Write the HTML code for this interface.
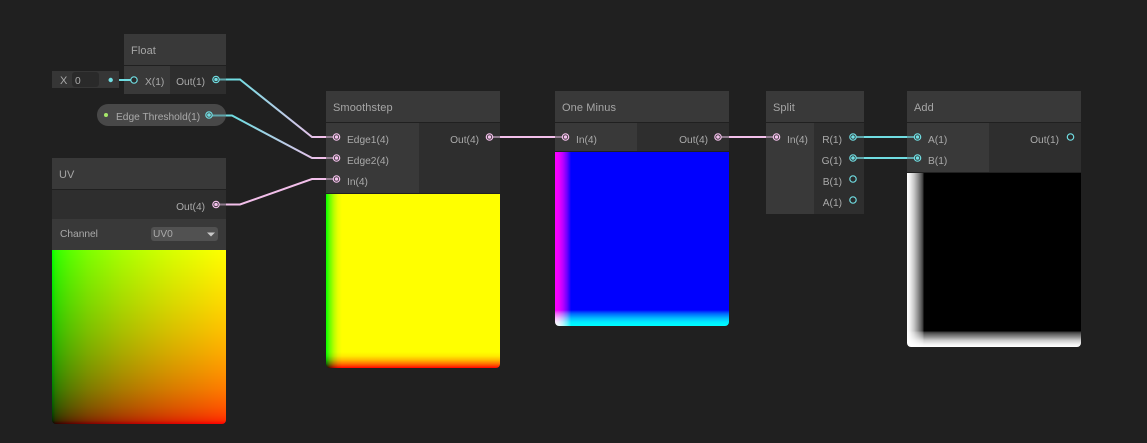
<!DOCTYPE html>
<html><head><meta charset="utf-8"><style>
html,body{margin:0;padding:0;background:#202020;width:1147px;height:443px;overflow:hidden}
div{position:absolute;box-sizing:border-box}
svg{position:absolute;left:0;top:0}
text{font-family:"Liberation Sans",sans-serif;font-size:10.2px;fill:#aaaaaa}
text.h{font-size:11px;fill:#a6a6a6;letter-spacing:.1px}
text.e{text-anchor:end}
.d{background:#2e2e2e}.l{background:#393939}
.pv{border-radius:0 0 4px 4px;background-blend-mode:screen}
</style></head><body>
<!-- wires beneath nodes -->
<svg width="1147" height="443">
<defs>
<linearGradient id="g1" gradientUnits="userSpaceOnUse" x1="235" y1="0" x2="322" y2="0"><stop offset="0" stop-color="#70dde2"/><stop offset="1" stop-color="#f2bfea"/></linearGradient>
</defs>
<g fill="none" stroke-width="2">
<path d="M216 79.5H240L312 137H337" stroke="url(#g1)"/>
<path d="M209 115.5H232L312 158H337" stroke="url(#g1)"/>
<path d="M216 204.5H240L312 179H337" stroke="#f2bfea"/>
<path d="M490 137H566M718 137H777" stroke="#f2bfea"/>
<path d="M853 137H918M853 158H918" stroke="#70dde2"/>
<path d="M111 80H134" stroke="#70dde2"/>
</g></svg>

<!-- Float -->
<div class="l" style="left:124px;top:34px;width:102px;height:31px"></div>
<div class="l" style="left:124px;top:66px;width:46px;height:28px"></div>
<div class="d" style="left:170px;top:66px;width:56px;height:28px"></div>
<div style="left:52px;top:71px;width:67px;height:17px;background:#363636"></div>
<div style="left:72px;top:72px;width:27px;height:15px;background:#2a2a2a;border-radius:3px"></div>
<!-- pill -->
<div style="left:97px;top:104px;width:129px;height:22px;border-radius:11px;background:#484848"></div>
<!-- UV -->
<div class="l" style="left:52px;top:158px;width:174px;height:31px"></div>
<div class="d" style="left:52px;top:190px;width:174px;height:29px"></div>
<div class="l" style="left:52px;top:219px;width:174px;height:31px"></div>
<div style="left:151px;top:227px;width:67px;height:14px;background:#515151;border-radius:3px"></div>
<div class="pv" style="left:52px;top:250px;width:174px;height:174px;background-image:linear-gradient(to right,rgb(0,0,0) 0,rgb(43,0,0) 2%,rgb(65,0,0) 5%,rgb(89,0,0) 10%,rgb(123,0,0) 20%,rgb(147,0,0) 30%,rgb(168,0,0) 40%,rgb(186,0,0) 50%,rgb(202,0,0) 60%,rgb(217,0,0) 70%,rgb(230,0,0) 80%,rgb(243,0,0) 90%,rgb(255,0,0) 100%),linear-gradient(to top,rgb(0,0,0) 0,rgb(0,43,0) 2%,rgb(0,65,0) 5%,rgb(0,89,0) 10%,rgb(0,123,0) 20%,rgb(0,147,0) 30%,rgb(0,168,0) 40%,rgb(0,186,0) 50%,rgb(0,202,0) 60%,rgb(0,217,0) 70%,rgb(0,230,0) 80%,rgb(0,243,0) 90%,rgb(0,255,0) 100%)"></div>
<!-- Smoothstep -->
<div class="l" style="left:326px;top:91px;width:174px;height:31px"></div>
<div class="l" style="left:326px;top:123px;width:93px;height:70px"></div>
<div class="d" style="left:419px;top:123px;width:81px;height:70px"></div>
<div class="pv" style="left:326px;top:194px;width:174px;height:174px;background-image:linear-gradient(to right,#000 0,#320000 1.6px,#6e0000 4px,#ba0000 8px,#ec0000 12px,#f00 16px),linear-gradient(to top,#000 0,#003200 1.6px,#006e00 4px,#00ba00 8px,#00ec00 12px,#0f0 16px)"></div>
<!-- One Minus -->
<div class="l" style="left:555px;top:91px;width:174px;height:31px"></div>
<div class="l" style="left:555px;top:123px;width:82px;height:28px"></div>
<div class="d" style="left:637px;top:123px;width:92px;height:28px"></div>
<div class="pv" style="left:555px;top:152px;width:174px;height:174px;background-color:#00f;background-image:linear-gradient(to right,#f00 0,#ec0000 4px,#ba0000 8px,#6e0000 12px,#320000 14.4px,#000 16px),linear-gradient(to top,#0f0 0,#00ec00 4px,#00ba00 8px,#006e00 12px,#003200 14.4px,#000 16px)"></div>
<!-- Split -->
<div class="l" style="left:766px;top:91px;width:98px;height:31px"></div>
<div class="l" style="left:766px;top:123px;width:48px;height:91px"></div>
<div class="d" style="left:814px;top:123px;width:50px;height:91px"></div>
<!-- Add -->
<div class="l" style="left:907px;top:91px;width:174px;height:31px"></div>
<div class="l" style="left:907px;top:123px;width:82px;height:49px"></div>
<div class="d" style="left:989px;top:123px;width:92px;height:49px"></div>
<div class="pv" style="left:907px;top:173px;width:174px;height:174px;background-color:#000;background-image:linear-gradient(to right,#fff 0,#f0f0f0 3px,#c8c8c8 7px,#909090 11px,#606060 14px,#383838 16px,#000 17px),linear-gradient(to top,#fff 0,#f0f0f0 3px,#c8c8c8 7px,#909090 10px,#606060 13px,#383838 15px,#000 16px)"></div>

<svg width="1147" height="443">
<g fill="none" stroke-width="2">
<path d="M326 137H337M326 158H337M326 179H337M500 137H490M555 137H566M729 137H718M766 137H777" stroke="#8f7a8d"/>
<path d="M864 137H853M864 158H853M907 137H918M907 158H918" stroke="#5fa5aa"/>
<path d="M124 80H134" stroke="#70dde2"/>
<path d="M226 79.5H216M226 115.5H209" stroke="#5fa5aa"/>
<path d="M226 204.5H216" stroke="#8f7a8d"/>
</g>
<!-- ports: pink filled -->
<g fill="#2a2a2a" stroke="#f2bfea" stroke-width="1.2">
<circle cx="216" cy="204.5" r="3.2"/><circle cx="336.5" cy="137" r="3.2"/><circle cx="336.5" cy="158" r="3.2"/><circle cx="336.5" cy="179" r="3.2"/><circle cx="489.5" cy="137" r="3.2"/><circle cx="565.5" cy="137" r="3.2"/><circle cx="718" cy="137" r="3.2"/><circle cx="776.5" cy="137" r="3.2"/>
</g>
<g fill="#f2bfea"><circle cx="216" cy="204.5" r="1.8"/><circle cx="336.5" cy="137" r="1.8"/><circle cx="336.5" cy="158" r="1.8"/><circle cx="336.5" cy="179" r="1.8"/><circle cx="489.5" cy="137" r="1.8"/><circle cx="565.5" cy="137" r="1.8"/><circle cx="718" cy="137" r="1.8"/><circle cx="776.5" cy="137" r="1.8"/></g>
<!-- ports: cyan -->
<g fill="#2a2a2a" stroke="#70dde2" stroke-width="1.2">
<circle cx="134" cy="80" r="3.2"/><circle cx="216" cy="79.5" r="3.2"/><circle cx="209" cy="115" r="3.2" fill="#484848"/><circle cx="853" cy="137" r="3.2"/><circle cx="853" cy="158" r="3.2"/><circle cx="853" cy="179" r="3.2"/><circle cx="853" cy="200" r="3.2"/><circle cx="917.5" cy="137" r="3.2"/><circle cx="917.5" cy="158" r="3.2"/><circle cx="1070.5" cy="137" r="3.2"/>
</g>
<g fill="#70dde2"><circle cx="216" cy="79.5" r="1.8"/><circle cx="209" cy="115" r="1.8"/><circle cx="853" cy="137" r="1.8"/><circle cx="853" cy="158" r="1.8"/><circle cx="917.5" cy="137" r="1.8"/><circle cx="917.5" cy="158" r="1.8"/><circle cx="110.7" cy="80" r="2.2"/></g>
<circle cx="106" cy="115" r="2" fill="#a6e86a"/>
<path d="M207 232.5h8l-4 4z" fill="#c8c8c8"/>

<text class="h" x="131" y="54">Float</text>
<text x="60" y="84" style="font-size:11px">X</text>
<text x="75" y="84">0</text>
<text x="145" y="85">X(1)</text>
<text class="e" x="205" y="85">Out(1)</text>
<text x="116" y="120">Edge Threshold(1)</text>
<text class="h" x="59" y="178">UV</text>
<text class="e" x="205" y="210">Out(4)</text>
<text x="60" y="237">Channel</text>
<text x="153" y="237">UV0</text>
<text class="h" x="333" y="111">Smoothstep</text>
<text x="347" y="143">Edge1(4)</text>
<text x="347" y="164">Edge2(4)</text>
<text x="347" y="185">In(4)</text>
<text class="e" x="479" y="143">Out(4)</text>
<text class="h" x="562" y="111">One Minus</text>
<text x="576" y="143">In(4)</text>
<text class="e" x="708" y="143">Out(4)</text>
<text class="h" x="773" y="111">Split</text>
<text x="787" y="143">In(4)</text>
<text class="e" x="842" y="143">R(1)</text>
<text class="e" x="842" y="164">G(1)</text>
<text class="e" x="842" y="185">B(1)</text>
<text class="e" x="842" y="206">A(1)</text>
<text class="h" x="914" y="111">Add</text>
<text x="928" y="143">A(1)</text>
<text x="928" y="164">B(1)</text>
<text class="e" x="1059" y="143">Out(1)</text>
</svg>
</body></html>
